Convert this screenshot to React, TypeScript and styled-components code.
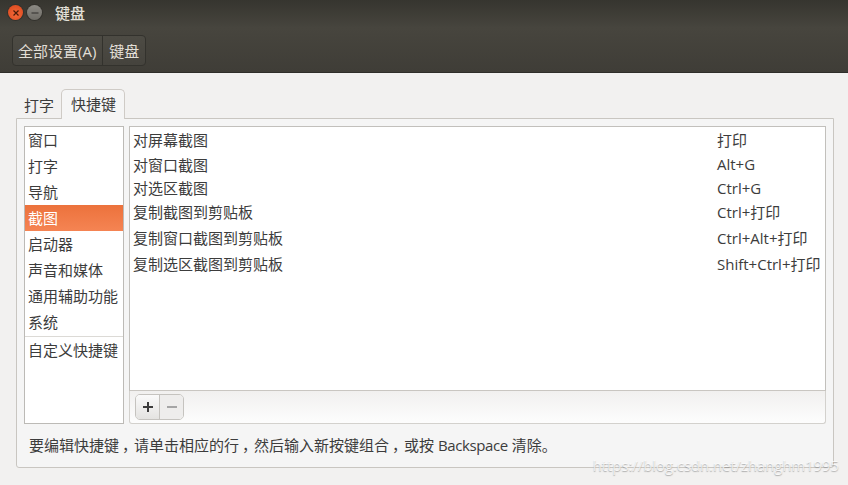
import styled, { createGlobalStyle } from "styled-components";

const categories = ["窗口", "打字", "导航", "截图", "启动器", "声音和媒体", "通用辅助功能", "系统"];

const shortcuts = [
  { name: "对屏幕截图", keys: "打印", height: 25 },
  { name: "对窗口截图", keys: "Alt+G", height: 24 },
  { name: "对选区截图", keys: "Ctrl+G", height: 23 },
  { name: "复制截图到剪贴板", keys: "Ctrl+打印", height: 25 },
  { name: "复制窗口截图到剪贴板", keys: "Ctrl+Alt+打印", height: 26 },
  { name: "复制选区截图到剪贴板", keys: "Shift+Ctrl+打印", height: 26 },
];

export default function App() {
  return (
    <Window>
      <GlobalStyle />
      <TitleBar>
        <CloseButton>
          <svg width="8" height="8" viewBox="0 0 8 8">
            <path d="M1.5 1.5l5 5M6.5 1.5l-5 5" stroke="#4a1a08" strokeWidth="1.2" />
          </svg>
        </CloseButton>
        <MinimizeButton>
          <svg width="8" height="8" viewBox="0 0 8 8">
            <path d="M0.5 4h7" stroke="#3c3b37" strokeWidth="1.2" />
          </svg>
        </MinimizeButton>
        <Title>键盘</Title>
      </TitleBar>
      <Toolbar>
        <Breadcrumbs>
          <Crumb>全部设置(A)</Crumb>
          <Crumb>键盘</Crumb>
        </Breadcrumbs>
      </Toolbar>
      <Content>
        <Tabs>
          <Tab>打字</Tab>
          <Tab $active>快捷键</Tab>
        </Tabs>
        <Notebook>
          <Columns>
            <CategoryList>
              {categories.map((c) => (
                <Category key={c} $selected={c === "截图"}>
                  {c}
                </Category>
              ))}
              <CustomCategory>自定义快捷键</CustomCategory>
            </CategoryList>
            <RightColumn>
              <ShortcutList>
                {shortcuts.map((s) => (
                  <ShortcutRow key={s.name} $height={s.height}>
                    <span>{s.name}</span>
                    <Keys>{s.keys}</Keys>
                  </ShortcutRow>
                ))}
              </ShortcutList>
              <ListToolbar>
                <ButtonGroup>
                  <AddButton>
                    <svg width="12" height="12" viewBox="0 0 12 12">
                      <path d="M6 1v10M1 6h10" stroke="#3c3c3c" strokeWidth="2" />
                    </svg>
                  </AddButton>
                  <RemoveButton>
                    <svg width="12" height="12" viewBox="0 0 12 12">
                      <path d="M1 6h10" stroke="#a5a5a5" strokeWidth="2" />
                    </svg>
                  </RemoveButton>
                </ButtonGroup>
              </ListToolbar>
            </RightColumn>
          </Columns>
          <Help>
            要编辑快捷键<Punct>，</Punct>请单击相应的行<Punct>，</Punct>然后输入新按键组合<Punct>，</Punct>或按 <Latin>Backspace</Latin> 清除。
          </Help>
        </Notebook>
      </Content>
      <Watermark>https://blog.csdn.net/zhanghm1995</Watermark>
    </Window>
  );
}

const GlobalStyle = createGlobalStyle`
  html, body {
    margin: 0;
    padding: 0;
    background: #f2f1f0;
  }
  body {
    font-family: "Open Sans", "Noto Sans CJK SC", sans-serif;
    font-size: 15px;
    color: #3c3c3c;
  }
`;

const Window = styled.div`
  position: relative;
  width: 848px;
  height: 485px;
  overflow: hidden;
  background: #f2f1f0;
`;

const TitleBar = styled.div`
  display: flex;
  align-items: center;
  box-sizing: border-box;
  height: 28px;
  padding: 0 0 3px 8px;
  background: linear-gradient(#36352f, #47453e);
`;

const CloseButton = styled.div`
  display: flex;
  align-items: center;
  justify-content: center;
  width: 15px;
  height: 15px;
  border-radius: 50%;
  background: radial-gradient(circle at 50% 60%, #f4693a, #d8451a);
  box-shadow: 0 0 0 1px #33322d;
`;

const MinimizeButton = styled(CloseButton)`
  margin-left: 4px;
  background: linear-gradient(#8c8a84, #6e6c66);
`;

const Title = styled.div`
  margin-left: 13px;
  font-weight: 500;
  color: #e4e1d9;
`;

const Toolbar = styled.div`
  display: flex;
  align-items: center;
  box-sizing: border-box;
  height: 45px;
  padding-left: 12px;
  background: linear-gradient(#47453e, #3f3d37);
  border-bottom: 1px solid #2f2e2a;
`;

const Breadcrumbs = styled.div`
  display: flex;
  height: 29px;
  border: 1px solid #33322d;
  border-radius: 4px;
  background: linear-gradient(#4d4b44, #45433d);
`;

const Crumb = styled.div`
  display: flex;
  align-items: center;
  padding: 0 6px 0 5px;
  color: #e2dfd7;
  & + & {
    border-left: 1px solid #33322d;
    padding: 0 6px;
  }
`;

const Content = styled.div`
  display: flex;
  flex-direction: column;
  padding: 17px 14px 0 16px;
`;

const Tabs = styled.div`
  display: flex;
  align-items: flex-end;
  height: 29px;
  padding-left: 1px;
  margin-bottom: -1px;
`;

const Tab = styled.div<{ $active?: boolean }>`
  position: relative;
  display: flex;
  align-items: center;
  justify-content: center;
  box-sizing: border-box;
  height: ${(p) => (p.$active ? "30px" : "28px")};
  padding: ${(p) => (p.$active ? "0 8px 2px 9px" : "0 7px 2px 7px")};
  border-radius: 5px 5px 0 0;
  ${(p) =>
    p.$active &&
    "background: #f5f5f5; border: 1px solid #cfcbc6; border-bottom: none; z-index: 1;"}
`;

const Notebook = styled.div`
  box-sizing: border-box;
  height: 350px;
  padding: 7px 7px 0;
  background: #f5f5f5;
  border: 1px solid #c9c6c1;
  border-radius: 0 0 3px 3px;
`;

const Columns = styled.div`
  display: flex;
  gap: 5px;
  height: 298px;
`;

const CategoryList = styled.div`
  display: flex;
  flex-direction: column;
  box-sizing: border-box;
  width: 100px;
  background: #fff;
  border: 1px solid #bcbab6;
`;

const Category = styled.div<{ $selected?: boolean }>`
  display: flex;
  align-items: center;
  box-sizing: border-box;
  flex: 0 0 26px;
  padding: 0 0 2px 3px;
  ${(p) =>
    p.$selected && "color: #fff; background: linear-gradient(#ec723c, #f58453);"}
`;

const CustomCategory = styled(Category)`
  flex: 0 0 29px;
  padding-bottom: 3px;
  margin-top: 1px;
  border-top: 1px solid #dcdad6;
`;

const RightColumn = styled.div`
  display: flex;
  flex-direction: column;
  flex: 1;
`;

const ShortcutList = styled.div`
  box-sizing: border-box;
  height: 265px;
  background: #fff;
  border: 1px solid #c2c0bc;
  border-bottom-color: #c9c6c1;
`;

const ShortcutRow = styled.div<{ $height: number }>`
  display: flex;
  align-items: center;
  justify-content: space-between;
  height: ${(p) => p.$height}px;
  padding-left: 3px;
`;

const Keys = styled.span`
  width: 108px;
  white-space: nowrap;
`;

const ListToolbar = styled.div`
  display: flex;
  align-items: center;
  flex: 1;
  padding-left: 5px;
  background: linear-gradient(#f1f0ef, #fdfdfd);
  border: 1px solid #d3d1cd;
  border-top: none;
  border-radius: 0 0 3px 3px;
`;

const ButtonGroup = styled.div`
  display: flex;
  height: 24px;
  border: 1px solid #c5c3bf;
  border-radius: 5px;
  overflow: hidden;
`;

const AddButton = styled.div`
  display: flex;
  align-items: center;
  justify-content: center;
  width: 23px;
  background: linear-gradient(#fafafa, #e4e3e1);
  border-right: 1px solid #c5c3bf;
`;

const RemoveButton = styled(AddButton)`
  background: #eeedec;
  border-right: none;
`;

const Help = styled.div`
  margin-top: 10px;
  padding-left: 5px;
`;

const Punct = styled.span`
  padding-left: 3px;
  letter-spacing: -3px;
`;

const Latin = styled.span`
  letter-spacing: -0.4px;
`;

const Watermark = styled.div`
  position: absolute;
  right: 9px;
  bottom: 10px;
  font-size: 14.8px;
  color: rgba(255, 255, 255, 0.75);
  text-shadow: 0 1px 1px rgba(120, 120, 120, 0.55);
`;
